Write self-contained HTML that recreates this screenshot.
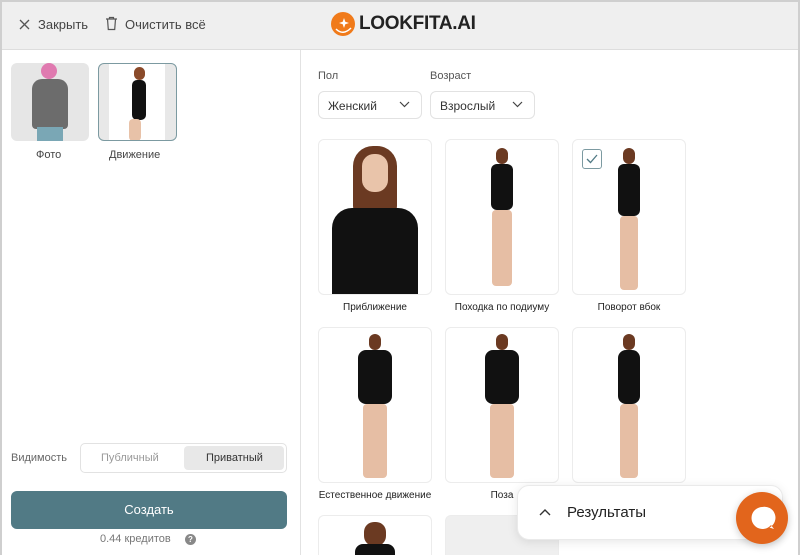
<!DOCTYPE html><html><head><meta charset="utf-8"><style>
*{box-sizing:border-box;margin:0;padding:0}
html,body{width:800px;height:555px;overflow:hidden}
body{font-family:"Liberation Sans",sans-serif;background:#fff;position:relative;color:#333}
.frame{position:absolute;inset:0;border:2px solid #cfcfcf;border-bottom:none;z-index:5;pointer-events:none}
.hdr{position:absolute;left:2px;right:2px;top:2px;height:48px;background:#efefef;border-bottom:1px solid #ddd}
.t{position:absolute;font-size:13px;color:#444;white-space:nowrap}
.left{position:absolute;left:2px;top:50px;width:299px;bottom:0;border-right:1px solid #e2e2e2}
.card{position:absolute;width:114px;height:156px;border:1px solid #ececec;border-radius:6px;background:#fff;overflow:hidden}
.lbl{position:absolute;font-size:10px;color:#222;text-align:center;width:130px}
.sel{position:absolute;height:28px;border:1px solid #e2e2e2;border-radius:6px;font-size:12px;color:#333;padding:7px 9px}
.fig{position:absolute;left:50%;transform:translateX(-50%)}
</style></head><body>
<div class="frame"></div>
<div class="hdr"></div>
<svg style="position:absolute;left:19px;top:19px" width="11" height="11"><path d="M1 1L10 10M10 1L1 10" stroke="#555" stroke-width="1.3"/></svg>
<div class="t" style="left:38px;top:17px">Закрыть</div>
<svg style="position:absolute;left:105px;top:16px" width="13" height="15"><path d="M1 3H12M4.5 3V1.5H8.5V3M2.5 3L3.3 13.5H9.7L10.5 3" fill="none" stroke="#555" stroke-width="1.2"/></svg>
<div class="t" style="left:125px;top:17px">Очистить всё</div>
<svg style="position:absolute;left:330px;top:11px" width="26" height="26"><circle cx="13" cy="13" r="12" fill="#f07a1a"/><path d="M6 18Q13 25 21 17" fill="none" stroke="#fff" stroke-width="1.5"/><path d="M14 7L15.3 10.7L19 12L15.3 13.3L14 17L12.7 13.3L9 12L12.7 10.7Z" fill="#fff"/></svg>
<div class="t" style="left:359px;top:13px;font-size:19px;font-weight:bold;color:#222;letter-spacing:-0.3px">LOOKFITA.AI</div>
<div class="left"></div>
<div style="position:absolute;left:11px;top:63px;width:78px;height:78px;background:#e6e6e6;border-radius:6px;overflow:hidden">
<div style="position:absolute;left:30px;top:0;width:16px;height:16px;background:#e07ab0;border-radius:8px"></div>
<div style="position:absolute;left:21px;top:16px;width:36px;height:50px;background:#6c6c6c;border-radius:10px 10px 4px 4px"></div>
<div style="position:absolute;left:26px;top:64px;width:26px;height:14px;background:#7aa7b5"></div></div>
<div style="position:absolute;left:98px;top:63px;width:79px;height:78px;border:1px solid #7c9aa1;border-radius:6px;background:#e8e8e8;overflow:hidden">
<div style="position:absolute;left:10px;top:0;width:56px;height:78px;background:#fff"></div>
<div style="position:absolute;left:35px;top:3px;width:11px;height:13px;background:#8a4a2a;border-radius:6px"></div>
<div style="position:absolute;left:33px;top:16px;width:14px;height:40px;background:#111;border-radius:5px"></div>
<div style="position:absolute;left:30px;top:55px;width:12px;height:22px;background:#e8c2a8;border-radius:4px"></div></div>
<div class="t" style="left:36px;top:149px;font-size:11px">Фото</div>
<div class="t" style="left:109px;top:149px;font-size:11px">Движение</div>
<div class="t" style="left:11px;top:452px;font-size:11px;color:#666">Видимость</div>
<div style="position:absolute;left:80px;top:443px;width:207px;height:30px;border:1px solid #e2e2e2;border-radius:5px">
<div class="t" style="left:20px;top:8px;font-size:11px;color:#999">Публичный</div>
<div style="position:absolute;left:103px;top:2px;width:100px;height:24px;background:#e8e8e8;border-radius:4px"></div>
<div class="t" style="left:125px;top:8px;font-size:11px;color:#333">Приватный</div></div>
<div style="position:absolute;left:11px;top:491px;width:276px;height:38px;background:#517a85;border-radius:6px;color:#fff;font-size:13px;text-align:center;line-height:38px">Создать</div>
<div class="t" style="left:100px;top:533px;font-size:11px;color:#777">0.44 кредитов</div>
<div style="position:absolute;left:185px;top:534px;width:11px;height:11px;border-radius:50%;background:#888;color:#fff;font-size:8px;text-align:center;line-height:11px;font-weight:bold">?</div>
<div class="t" style="left:318px;top:70px;font-size:11px;color:#555">Пол</div>
<div class="t" style="left:430px;top:70px;font-size:11px;color:#555">Возраст</div>
<div class="sel" style="left:318px;top:91px;width:104px">Женский</div>
<div class="sel" style="left:430px;top:91px;width:105px">Взрослый</div>
<svg style="position:absolute;left:399px;top:101px" width="11" height="7"><path d="M1 1L5.5 5.5L10 1" fill="none" stroke="#444" stroke-width="1.2"/></svg>
<svg style="position:absolute;left:512px;top:101px" width="11" height="7"><path d="M1 1L5.5 5.5L10 1" fill="none" stroke="#444" stroke-width="1.2"/></svg>

<div class="card" style="left:318px;top:139px">
<div class="fig" style="top:6px;width:44px;height:70px;background:#6b3a22;border-radius:20px 20px 10px 10px"></div>
<div class="fig" style="top:14px;width:26px;height:38px;background:#e9c4aa;border-radius:12px"></div>
<div class="fig" style="top:68px;width:86px;height:88px;background:#111;border-radius:20px 20px 0 0"></div></div>
<div class="card" style="left:445px;top:139px">
<div class="fig" style="top:8px;width:12px;height:16px;background:#6b3a22;border-radius:6px"></div>
<div class="fig" style="top:24px;width:22px;height:46px;background:#111;border-radius:6px"></div>
<div class="fig" style="top:70px;width:20px;height:76px;background:#e6bea4;border-radius:4px"></div></div>
<div class="card" style="left:572px;top:139px">
<div style="position:absolute;left:9px;top:9px;width:20px;height:20px;border:1px solid #7c9aa1;border-radius:3px"></div>
<svg style="position:absolute;left:13px;top:14px" width="12" height="10"><path d="M1 5L4.5 8.5L11 1" fill="none" stroke="#517a85" stroke-width="1.3"/></svg>
<div class="fig" style="top:8px;width:12px;height:16px;background:#6b3a22;border-radius:6px"></div>
<div class="fig" style="top:24px;width:22px;height:52px;background:#111;border-radius:6px"></div>
<div class="fig" style="top:76px;width:18px;height:74px;background:#e6bea4;border-radius:4px"></div></div>
<div class="lbl" style="left:310px;top:302px">Приближение</div>
<div class="lbl" style="left:437px;top:302px">Походка по подиуму</div>
<div class="lbl" style="left:564px;top:302px">Поворот вбок</div>

<div class="card" style="left:318px;top:327px">
<div class="fig" style="top:6px;width:12px;height:16px;background:#6b3a22;border-radius:6px"></div>
<div class="fig" style="top:22px;width:34px;height:54px;background:#111;border-radius:8px"></div>
<div class="fig" style="top:76px;width:24px;height:74px;background:#e6bea4;border-radius:4px"></div></div>
<div class="card" style="left:445px;top:327px">
<div class="fig" style="top:6px;width:12px;height:16px;background:#6b3a22;border-radius:6px"></div>
<div class="fig" style="top:22px;width:34px;height:54px;background:#111;border-radius:8px"></div>
<div class="fig" style="top:76px;width:24px;height:74px;background:#e6bea4;border-radius:4px"></div></div>
<div class="card" style="left:572px;top:327px">
<div class="fig" style="top:6px;width:12px;height:16px;background:#6b3a22;border-radius:6px"></div>
<div class="fig" style="top:22px;width:22px;height:54px;background:#111;border-radius:8px"></div>
<div class="fig" style="top:76px;width:18px;height:74px;background:#e6bea4;border-radius:4px"></div></div>
<div class="lbl" style="left:310px;top:490px">Естественное движение</div>
<div class="lbl" style="left:437px;top:490px">Поза</div>
<div class="card" style="left:318px;top:515px;height:40px;border-bottom:none;border-radius:6px 6px 0 0">
<div class="fig" style="top:6px;width:22px;height:24px;background:#6b3a22;border-radius:10px"></div>
<div class="fig" style="top:28px;width:40px;height:12px;background:#111;border-radius:8px 8px 0 0"></div></div>
<div class="card" style="left:445px;top:515px;height:40px;background:#efefef;border-bottom:none;border-radius:6px 6px 0 0"></div>

<div style="position:absolute;left:517px;top:485px;width:266px;height:55px;background:#fff;border:1px solid #eaeaea;border-radius:12px;box-shadow:0 2px 10px rgba(0,0,0,.1)"></div>
<svg style="position:absolute;left:539px;top:508px" width="12" height="8"><path d="M1 7L6 2L11 7" fill="none" stroke="#333" stroke-width="1.4"/></svg>
<div class="t" style="left:567px;top:504px;font-size:15px;color:#222">Результаты</div>
<div style="position:absolute;left:736px;top:492px;width:52px;height:52px;border-radius:50%;background:#e2651c;box-shadow:0 2px 8px rgba(0,0,0,.2)"></div>
<svg style="position:absolute;left:749px;top:505px" width="27" height="27"><path d="M13 2A11 11 0 1 0 22 20L25 24L20.5 22.5A11 11 0 0 0 13 2Z" fill="#fff"/></svg>
</body></html>
